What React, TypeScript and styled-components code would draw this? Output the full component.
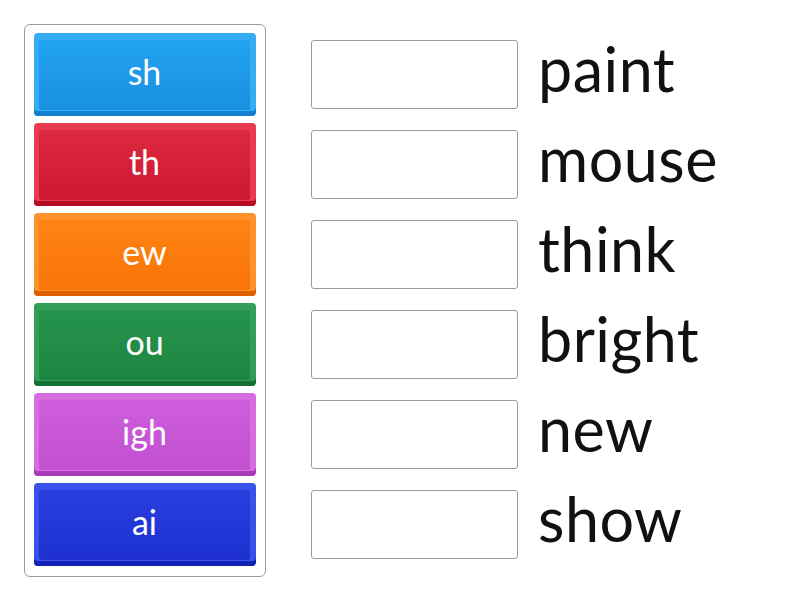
import React from "react";
import styled, { createGlobalStyle } from "styled-components";

const Global = createGlobalStyle`
  html, body { margin: 0; padding: 0; background: #ffffff; }
  body { font-family: Lato, "Noto Sans", sans-serif; }
`;

const Page = styled.div`
  display: flex;
  align-items: flex-start;
  gap: 45px;
  padding: 24px 0 0 24px;
  width: 800px;
  height: 600px;
  box-sizing: border-box;
`;

const Panel = styled.div`
  width: 242px;
  box-sizing: border-box;
  border: 1px solid #9a9a9a;
  border-radius: 6px;
  padding: 8px 9px 10px 9px;
  display: flex;
  flex-direction: column;
  gap: 7px;
`;

const Tile = styled.div<{ $light: string; $dark: string }>`
  height: 83px;
  box-sizing: border-box;
  border-radius: 4px;
  background: ${(p) => p.$light};
  box-shadow: inset 0 -5px 0 ${(p) => p.$dark};
  padding: 7px 6px 6px 5px;
  display: flex;
`;

const Face = styled.div<{ $top: string; $bottom: string }>`
  flex: 1;
  border-radius: 2px;
  background: linear-gradient(${(p) => p.$top}, ${(p) => p.$bottom});
  display: flex;
  align-items: center;
  justify-content: center;
  color: #ffffff;
  font-size: 34px;
  line-height: 1;
  padding-bottom: 6px;
`;

const Targets = styled.div`
  display: flex;
  flex-direction: column;
  gap: 7px;
  padding-top: 9px;
`;

const Row = styled.div`
  height: 83px;
  display: flex;
  align-items: center;
  gap: 20px;
`;

const Box = styled.div`
  width: 207px;
  height: 69px;
  box-sizing: border-box;
  border: 1px solid #9a9a9a;
  border-radius: 3px;
  background: #ffffff;
`;

const Word = styled.div`
  font-size: 61px;
  line-height: 1;
  letter-spacing: 0.5px;
  color: #111111;
  padding-bottom: 12px;
`;

const tiles = [
  { t: "sh", light: "#36acf4", top: "#22a2f0", bottom: "#1890e0", dark: "#137fd0" },
  { t: "th", light: "#e83a50", top: "#de2a40", bottom: "#cc1830", dark: "#b30c24" },
  { t: "ew", light: "#ff922a", top: "#ff8414", bottom: "#f87406", dark: "#dc6000" },
  { t: "ou", light: "#329e58", top: "#25944c", bottom: "#1f8642", dark: "#157034" },
  { t: "igh", light: "#d66ee2", top: "#ce5edc", bottom: "#c250d0", dark: "#a83cb6" },
  { t: "ai", light: "#3a52ea", top: "#2a3ee0", bottom: "#1e30d0", dark: "#1222b4" },
];

const words = ["paint", "mouse", "think", "bright", "new", "show"];

export default function App() {
  return (
    <>
      <Global />
      <Page>
        <Panel>
          {tiles.map((x) => (
            <Tile key={x.t} $light={x.light} $dark={x.dark}>
              <Face $top={x.top} $bottom={x.bottom}>{x.t}</Face>
            </Tile>
          ))}
        </Panel>
        <Targets>
          {words.map((w) => (
            <Row key={w}>
              <Box />
              <Word>{w}</Word>
            </Row>
          ))}
        </Targets>
      </Page>
    </>
  );
}
